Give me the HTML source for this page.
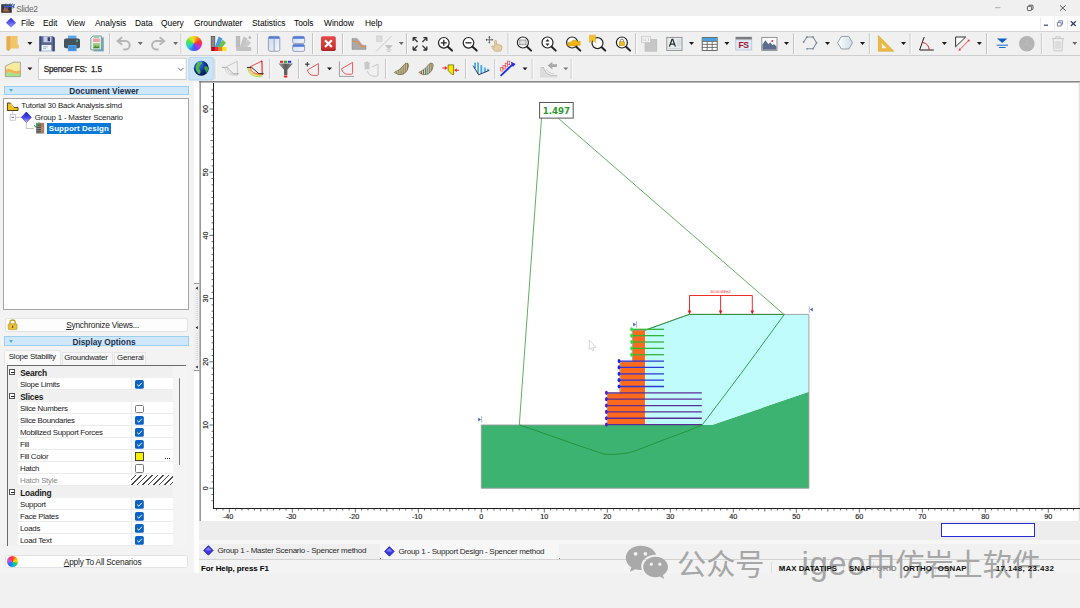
<!DOCTYPE html>
<html><head><meta charset="utf-8"><title>Slide2</title>
<style>
*{box-sizing:border-box;margin:0;padding:0}
html,body{width:1080px;height:608px;overflow:hidden;background:#f0f0f0}
body{position:relative;font-family:"Liberation Sans","Noto Sans CJK SC",sans-serif;font-size:8px;color:#000;line-height:1}
.abs{position:absolute}
.t{position:absolute;white-space:nowrap;line-height:10px;height:10px}
#title{left:0;top:0;width:1080px;height:16px;background:#f0f0f0}
#menu{left:0;top:16px;width:1080px;height:15px;background:#fff}
#tb1{left:0;top:31px;width:1080px;height:25px;background:#f0f0f0;border-top:1px solid #d4d4d4;border-bottom:1px solid #cfcfcf}
#tb2{left:0;top:56px;width:1080px;height:25px;background:#f0f0f0}
.m{font-size:8.4px;top:17.5px;line-height:11px;height:11px}
.sep{position:absolute;width:1px;background:#b9b9b9;height:19px}
.dd{position:absolute;width:0;height:0;border-left:2.5px solid transparent;border-right:2.5px solid transparent;border-top:3px solid #222}
.hb{font-weight:bold;font-size:8.3px;color:#1c2f4a;top:0}
.tr{font-size:7.9px;color:#1a1a1a;letter-spacing:-0.2px}
.sb{z-index:5;font-weight:bold;font-size:7.9px;top:563.6px;letter-spacing:-0.15px}
</style></head><body>
<!-- TITLE -->
<div id="title" class="abs"></div>
<div class="t" style="left:16.2px;top:3.6px;font-size:8.4px;color:#6a6a6a;letter-spacing:-0.3px">Slide2</div>
<!-- MENU -->
<div id="menu" class="abs"></div>
<div class="t m" style="left:21px">File</div>
<div class="t m" style="left:43px">Edit</div>
<div class="t m" style="left:67px">View</div>
<div class="t m" style="left:95px">Analysis</div>
<div class="t m" style="left:135px">Data</div>
<div class="t m" style="left:161px">Query</div>
<div class="t m" style="left:194px">Groundwater</div>
<div class="t m" style="left:252px">Statistics</div>
<div class="t m" style="left:294px">Tools</div>
<div class="t m" style="left:324px">Window</div>
<div class="t m" style="left:365px">Help</div>
<!-- TOOLBARS -->
<div id="tb1" class="abs"></div>
<div id="tb2" class="abs"></div>
<svg class="abs" style="left:0;top:0" width="1080" height="82" viewBox="0 0 1080 82">
<defs>
<linearGradient id="gd" x1="0" y1="0" x2="0" y2="1"><stop offset="0" stop-color="#2222dd"/><stop offset="1" stop-color="#a0a0fa"/></linearGradient>
<linearGradient id="gwin" x1="0" y1="0" x2="1" y2="1"><stop offset="0" stop-color="#c9d6ee"/><stop offset="1" stop-color="#f8fafd"/></linearGradient>
<linearGradient id="gred" x1="0" y1="0" x2="0" y2="1"><stop offset="0" stop-color="#e24a48"/><stop offset="0.8" stop-color="#d03030"/><stop offset="1" stop-color="#9a2424"/></linearGradient>
<linearGradient id="ghex" x1="0" y1="0" x2="1" y2="0"><stop offset="0" stop-color="#fff"/><stop offset="1" stop-color="#cddbe8"/></linearGradient>
<radialGradient id="gglobe" cx="0.35" cy="0.3" r="0.8"><stop offset="0" stop-color="#3a7ae0"/><stop offset="0.6" stop-color="#0a2a8a"/><stop offset="1" stop-color="#04103a"/></radialGradient>
<linearGradient id="gfun" x1="0" y1="0" x2="1" y2="0"><stop offset="0" stop-color="#9a9a9a"/><stop offset="0.5" stop-color="#5a5a5a"/><stop offset="1" stop-color="#8a8a8a"/></linearGradient>
</defs>
<path d="M109.6 33V54" stroke="#c4c4c4" stroke-width="1"/><path d="M110.6 33V54" stroke="#fafafa" stroke-width="1"/>
<path d="M181 33V54" stroke="#c4c4c4" stroke-width="1"/><path d="M182 33V54" stroke="#fafafa" stroke-width="1"/>
<path d="M257.5 33V54" stroke="#c4c4c4" stroke-width="1"/><path d="M258.5 33V54" stroke="#fafafa" stroke-width="1"/>
<path d="M312.5 33V54" stroke="#c4c4c4" stroke-width="1"/><path d="M313.5 33V54" stroke="#fafafa" stroke-width="1"/>
<path d="M342.5 33V54" stroke="#c4c4c4" stroke-width="1"/><path d="M343.5 33V54" stroke="#fafafa" stroke-width="1"/>
<path d="M406.5 33V54" stroke="#c4c4c4" stroke-width="1"/><path d="M407.5 33V54" stroke="#fafafa" stroke-width="1"/>
<path d="M508.1 33V54" stroke="#c4c4c4" stroke-width="1"/><path d="M509.1 33V54" stroke="#fafafa" stroke-width="1"/>
<path d="M635.6 33V54" stroke="#c4c4c4" stroke-width="1"/><path d="M636.6 33V54" stroke="#fafafa" stroke-width="1"/>
<path d="M793.5 33V54" stroke="#c4c4c4" stroke-width="1"/><path d="M794.5 33V54" stroke="#fafafa" stroke-width="1"/>
<path d="M869.4 33V54" stroke="#c4c4c4" stroke-width="1"/><path d="M870.4 33V54" stroke="#fafafa" stroke-width="1"/>
<path d="M910.2 33V54" stroke="#c4c4c4" stroke-width="1"/><path d="M911.2 33V54" stroke="#fafafa" stroke-width="1"/>
<path d="M986.5 33V54" stroke="#c4c4c4" stroke-width="1"/><path d="M987.5 33V54" stroke="#fafafa" stroke-width="1"/>
<path d="M1041.4 33V54" stroke="#c4c4c4" stroke-width="1"/><path d="M1042.4 33V54" stroke="#fafafa" stroke-width="1"/>
<path d="M215 59V79" stroke="#c4c4c4" stroke-width="1"/><path d="M216 59V79" stroke="#fafafa" stroke-width="1"/>
<path d="M269.8 59V79" stroke="#c4c4c4" stroke-width="1"/><path d="M270.8 59V79" stroke="#fafafa" stroke-width="1"/>
<path d="M298.5 59V79" stroke="#c4c4c4" stroke-width="1"/><path d="M299.5 59V79" stroke="#fafafa" stroke-width="1"/>
<path d="M385.6 59V79" stroke="#c4c4c4" stroke-width="1"/><path d="M386.6 59V79" stroke="#fafafa" stroke-width="1"/>
<path d="M465.6 59V79" stroke="#c4c4c4" stroke-width="1"/><path d="M466.6 59V79" stroke="#fafafa" stroke-width="1"/>
<path d="M494.8 59V79" stroke="#c4c4c4" stroke-width="1"/><path d="M495.8 59V79" stroke="#fafafa" stroke-width="1"/>
<path d="M532.2 59V79" stroke="#c4c4c4" stroke-width="1"/><path d="M533.2 59V79" stroke="#fafafa" stroke-width="1"/>
<path d="M571.2 59V79" stroke="#c4c4c4" stroke-width="1"/><path d="M572.2 59V79" stroke="#fafafa" stroke-width="1"/>
<path d="M27.4 42.1h5l-2.5 2.8z" fill="#1a1a1a"/>
<path d="M689.0 42.1h5l-2.5 2.8z" fill="#1a1a1a"/>
<path d="M724.4 42.1h5l-2.5 2.8z" fill="#1a1a1a"/>
<path d="M784.0 42.1h5l-2.5 2.8z" fill="#1a1a1a"/>
<path d="M825.0 42.1h5l-2.5 2.8z" fill="#1a1a1a"/>
<path d="M860.0 42.1h5l-2.5 2.8z" fill="#1a1a1a"/>
<path d="M901.0 42.1h5l-2.5 2.8z" fill="#1a1a1a"/>
<path d="M941.9 42.1h5l-2.5 2.8z" fill="#1a1a1a"/>
<path d="M976.9 42.1h5l-2.5 2.8z" fill="#1a1a1a"/>
<path d="M137.8 42.1h5l-2.5 2.8z" fill="#6a6a6a"/>
<path d="M173.1 42.1h5l-2.5 2.8z" fill="#6a6a6a"/>
<path d="M398.8 42.1h5l-2.5 2.8z" fill="#6a6a6a"/>
<path d="M1072.3 42.1h5l-2.5 2.8z" fill="#6a6a6a"/>
<path d="M27.4 67.5h5l-2.5 2.8z" fill="#1a1a1a"/>
<path d="M327.0 67.5h5l-2.5 2.8z" fill="#1a1a1a"/>
<path d="M522.5 67.5h5l-2.5 2.8z" fill="#1a1a1a"/>
<path d="M563.3 67.5h5l-2.5 2.8z" fill="#7a7a7a"/>
<rect x="1.2" y="4.2" width="10.6" height="8.6" fill="#3a3532"/><path d="M3 11.5c1-4 2-5 3.500-3.500s2 2.500 3.500 3.500z" fill="#b8623a"/><path d="M3.500 4.500l2 5M6 3.500l1.500 6M8.500 4l-1 5M10 3.500l2 4.500M12.500 3.500l1.500 4.500M14.500 4l-1.500 4.500M4 6.500h9" stroke="#3f63c4" stroke-width="1" fill="none"/>
<path d="M995 7.700h5.400" stroke="#9a9a9a" stroke-width="0.8"/>
<rect x="1027.4" y="6.300" width="4.200" height="4.200" rx="0.8" fill="none" stroke="#333" stroke-width="0.8"/><path d="M1028.8 6.300v-0.300a0.800 0.800 0 0 1 0.800 -0.800h2.600a0.800 0.800 0 0 1 0.800 0.800v2.600a0.800 0.800 0 0 1 -0.800 0.800h-0.400" fill="none" stroke="#333" stroke-width="0.8"/>
<path d="M1060 5.400l5.600 5.200M1065.600 5.400l-5.600 5.200" stroke="#333" stroke-width="0.8"/>
<path d="M11 17.800l5.100 5-5.100 5-5.100-5z" fill="url(#gd)"/>
<path d="M1043.800 25.200h4.200" stroke="#3a4878" stroke-width="1.200"/>
<path d="M1057.400 22.600h3.800v3.400h-3.800zM1058.800 22.400v-1.600h3.800v3.400h-1.400" fill="none" stroke="#5a6890" stroke-width="0.8"/>
<path d="M1070.800 21.200l5 4.800M1075.800 21.200l-5 4.800" stroke="#3a4878" stroke-width="1.400"/>
<path d="M1040.500 17v13M1054.500 17v13M1067.500 17v13" stroke="#ececec" stroke-width="1"/>
<path d="M9.600 36h8v8.600h1.200v3.800h-9.200z" fill="#f1c56c"/><path d="M6.400 36.300l4-0.300v13.400l-1.900 1.700-2.100-1z" fill="#e4ad50"/>
<path d="M39.400 36.200h13.600l1.700 1.600v13.400h-15.300z" fill="#5a6a92"/><path d="M39.400 36.200h1.800v15h-1.800zM53 36.800l1.700 1v13.400h-1.700z" fill="#3e4c74"/><rect x="43.400" y="36.400" width="8" height="5.800" fill="#c6cfe6"/><rect x="47.600" y="37.200" width="2.400" height="4" fill="#36446c"/><rect x="41.600" y="45" width="9.800" height="6.200" fill="#f2f6fc"/><path d="M43.200 46.800h4.600M43.200 48.400h3" stroke="#8a93b0" stroke-width="0.700"/><path d="M41.600 50.600h9.800" stroke="#b8d4f0" stroke-width="1"/>
<rect x="68" y="35.600" width="8.400" height="4" fill="#5aa8ea"/><rect x="64" y="38.600" width="16" height="9.600" rx="1.800" fill="#48525c"/><rect x="67.800" y="45" width="8.800" height="6.200" fill="#4a9ce4"/><path d="M69.200 47.400h6M69.200 49.200h6" stroke="#2f7ac2" stroke-width="0.600"/><circle cx="77" cy="41" r="0.900" fill="#3ad08a"/>
<path d="M93.400 37.400h10.400v14h-10.400z" fill="#7aa6b2"/><path d="M90.800 38l2.400-2h8.200v13.800h-10.600z" fill="#e6f0f0" stroke="#6a98a6" stroke-width="0.900"/><rect x="93" y="38.600" width="6.800" height="3.400" fill="#f2a0a0"/><rect x="93" y="43.200" width="6.800" height="5" fill="#9ac86a"/><path d="M93 48.200l2.400-2.800 1.600 1.600 1.400-1.200 1.400 2.400z" fill="#4a8a3a"/><path d="M94 37.200h5" stroke="#3aa04a" stroke-width="0.600"/>
<path d="M122.200 37.200l-4.600 3.800 4.600 3.800" fill="none" stroke="#b6b6b6" stroke-width="2"/><path d="M118 41h7.400a4.300 4.300 0 0 1 0 8.600h-2.200" fill="none" stroke="#b6b6b6" stroke-width="2"/>
<path d="M159.600 37.200l4.600 3.800-4.600 3.800" fill="none" stroke="#b6b6b6" stroke-width="2"/><path d="M163.800 41h-7.400a4.300 4.300 0 0 0 0 8.600h2.200" fill="none" stroke="#b6b6b6" stroke-width="2"/>
</svg>
<div class="abs" style="left:186.200px;top:35.600px;width:15.800px;height:15.800px;border-radius:50%;background:conic-gradient(from 0deg,#ffd21a,#ff8a1a,#ff3a2a,#e82a7a,#b03af0,#5a4af0,#2a7af0,#2ac0f0,#2ae0a0,#5ae03a,#c0f02a,#ffd21a)"></div>
<svg class="abs" style="left:0;top:0" width="1080" height="82" viewBox="0 0 1080 82">
<rect x="211.2" y="36.400" width="3.600" height="11" fill="#8a8a8a" stroke="#4a4a4a" stroke-width="0.700"/>
<path d="M215.0 47l3.600-10.400 3.800 1.800-3 8.600z" fill="#4a9ae8"/>
<path d="M217.6 47l5.200-7.200 3.200 3-3.600 4.200z" fill="#6ac04a"/>
<rect x="211.2" y="47" width="3.750" height="4" fill="#c00010"/>
<rect x="214.95" y="47" width="3.750" height="4" fill="#e03030"/>
<rect x="218.7" y="47" width="3.750" height="4" fill="#f07a1a"/>
<rect x="222.45" y="47" width="3.750" height="4" fill="#f4c81a"/>
<rect x="222.45" y="47" width="3.750" height="4" fill="#f8e61a"/>
<rect x="236.2" y="36.400" width="3.600" height="11" fill="#bdbdbd" stroke="#b0b0b0" stroke-width="0.700"/>
<path d="M240.0 47l3.600-10.400 3.800 1.800-3 8.600z" fill="#c4c4c4"/>
<path d="M242.6 47l5.200-7.200 3.200 3-3.600 4.200z" fill="#cacaca"/>
<rect x="236.2" y="47" width="15" height="4" fill="#c2c2c2"/>
<path d="M248.6 37.200l1.200-1.800 1.200 1.800a1.300 1.300 0 1 1-2.400 0z" fill="#b8b8b8"/>
<rect x="268.400" y="36.400" width="11.400" height="14.800" rx="1.600" fill="url(#gwin)" stroke="#8c98b0" stroke-width="0.900"/><path d="M268.800 38.800v-1a1.200 1.200 0 0 1 1.200-1.200h8.200a1.200 1.200 0 0 1 1.200 1.200v1z" fill="#4a78de"/><path d="M274.100 36.600v14.400" stroke="#8c98b0" stroke-width="0.900"/>
<rect x="292.600" y="36.4" width="12" height="7" rx="1.600" fill="url(#gwin)" stroke="#8c98b0" stroke-width="0.900"/><path d="M293 38.8v-1a1.200 1.200 0 0 1 1.200-1.200h8.800a1.200 1.200 0 0 1 1.200 1.200v1z" fill="#4a78de"/>
<rect x="292.600" y="44.4" width="12" height="7" rx="1.600" fill="url(#gwin)" stroke="#8c98b0" stroke-width="0.900"/><path d="M293 46.8v-1a1.200 1.200 0 0 1 1.200-1.200h8.800a1.200 1.200 0 0 1 1.200 1.200v1z" fill="#4a78de"/>
<rect x="321" y="36.200" width="14.800" height="14.800" rx="1.800" fill="url(#gred)"/><path d="M325 40.200l6.800 6.800M331.800 40.200l-6.800 6.800" stroke="#fff" stroke-width="2.200"/>
<path d="M352 38.400h4c3 0 4.500 7 8 7h2v4h-14z" fill="#a9a9a9" stroke="#8a8a8a" stroke-width="0.500"/><path d="M352.400 41.200h3.400c3 0 4 5.600 7.400 5.600h2.600" fill="none" stroke="#f0803a" stroke-width="1.100"/>
<rect x="376.600" y="36" width="5.400" height="5.400" fill="#dcdcdc" stroke="#c8c8c8" stroke-width="0.600"/><path d="M376 51.600l15.600-15.600" stroke="#c6c6c6" stroke-width="0.900"/><path d="M385.400 45.600h6.800l-3.400 3.200zM386.200 49.800h5.200M387.200 51.400h3.200" fill="#c0c0c0" stroke="#c0c0c0" stroke-width="0.800"/>
<path d="M417.6 42l-4.4 -4.4" stroke="#2c2c2c" stroke-width="1.300"/><path d="M413.20000000000005 37.6h3.4M413.20000000000005 37.6v3.4" stroke="#2c2c2c" stroke-width="1.300" fill="none"/>
<path d="M422.4 42l4.4 -4.4" stroke="#2c2c2c" stroke-width="1.300"/><path d="M426.79999999999995 37.6h-3.4M426.79999999999995 37.6v3.4" stroke="#2c2c2c" stroke-width="1.300" fill="none"/>
<path d="M417.6 45.6l-4.4 4.4" stroke="#2c2c2c" stroke-width="1.300"/><path d="M413.20000000000005 50.0h3.4M413.20000000000005 50.0v-3.4" stroke="#2c2c2c" stroke-width="1.300" fill="none"/>
<path d="M422.4 45.6l4.4 4.4" stroke="#2c2c2c" stroke-width="1.300"/><path d="M426.79999999999995 50.0h-3.4M426.79999999999995 50.0v-3.4" stroke="#2c2c2c" stroke-width="1.300" fill="none"/>
<circle cx="443.8" cy="42.8" r="5.3" fill="#fff" stroke="#222" stroke-width="1.200"/><path d="M447.84763000000004 46.847629999999995L452.0 50.6" stroke="#222" stroke-width="2" stroke-linecap="round"/>
<path d="M440.800 42.800h6M443.800 39.800v6" stroke="#222" stroke-width="1.300"/>
<circle cx="468.5" cy="42.8" r="5.3" fill="#fff" stroke="#222" stroke-width="1.200"/><path d="M472.54763 46.847629999999995L476.7 50.6" stroke="#222" stroke-width="2" stroke-linecap="round"/>
<path d="M465.500 42.800h6" stroke="#222" stroke-width="1.300"/>
<path d="M486.400 39.800h6M489.400 36.800v6" stroke="#555" stroke-width="0.800"/><path d="M489.400 36l1.200 1.400h-2.400zM489.400 43.600l1.200-1.400h-2.400zM485.600 39.800l1.400-1.200v2.400zM493.200 39.800l-1.400-1.200v2.400z" fill="#444"/>
<path d="M494.600 41.400a1 1 0 0 1 2 0v3l3.800 0.600c1.400 0.200 1.800 1.400 1.600 2.600l-0.600 2.400c-0.200 0.800-0.800 1.200-1.600 1.200h-4.200c-0.800 0-1.400-0.400-1.800-1l-2-3.200c-0.400-0.800 0.600-1.600 1.400-0.800l1.400 1.200z" fill="#e6cfa6" stroke="#b89a6a" stroke-width="0.600"/>
<circle cx="522.9" cy="42.5" r="5.5" fill="#fff" stroke="#222" stroke-width="1.200"/><path d="M527.0890499999999 46.689049999999995L531.1 50.6" stroke="#222" stroke-width="2" stroke-linecap="round"/>
<rect x="519.800" y="40" width="6.200" height="4.800" fill="#e0e0e0" stroke="#777" stroke-width="0.700"/>
<circle cx="547.5" cy="42.5" r="5.5" fill="#fff" stroke="#222" stroke-width="1.200"/><path d="M551.68905 46.689049999999995L555.7 50.6" stroke="#222" stroke-width="2" stroke-linecap="round"/>
<path d="M547.500 39l2 2.600h-4zM547.500 46l2-2.600h-4z" fill="#222"/>
<circle cx="572.1" cy="42.5" r="5.5" fill="#fff" stroke="#222" stroke-width="1.200"/><path d="M576.28905 46.689049999999995L580.3000000000001 50.6" stroke="#222" stroke-width="2" stroke-linecap="round"/>
<path d="M567.800 42.600l3-0.400 2-2h3.600v1h3.800v4h-3.800v0.800h-8.600z" fill="#f2b40e" stroke="#b8860a" stroke-width="0.400"/>
<circle cx="597.5" cy="43.1" r="5.5" fill="#fff" stroke="#222" stroke-width="1.200"/><path d="M601.68905 47.289049999999996L605.2 50.6" stroke="#222" stroke-width="2" stroke-linecap="round"/>
<path d="M589.400 35.200h6.200v7.400l-3.100-2-3.100 2z" fill="#f4c22a" stroke="#d8a010" stroke-width="0.400"/>
<circle cx="621.9" cy="42.5" r="5.5" fill="#fff" stroke="#222" stroke-width="1.200"/><path d="M626.0890499999999 46.689049999999995L630.1 50.6" stroke="#222" stroke-width="2" stroke-linecap="round"/>
<path d="M620.400 41.800v-1.200a1.500 1.500 0 0 1 3 0v1.200" fill="none" stroke="#555" stroke-width="0.800"/><rect x="619.200" y="41.800" width="5.400" height="3.800" fill="#f0b820" stroke="#a87a0a" stroke-width="0.400"/>
<rect x="645" y="39.400" width="11.800" height="11.800" fill="#c6c6c6" stroke="#b8b8b8" stroke-width="0.600"/><rect x="641.400" y="36.300" width="9.200" height="6.200" fill="#f4f4f4" stroke="#c4c4c4" stroke-width="0.700"/><path d="M643 38v3M644.800 38.200c1.200-0.600 1.600 0.800 0 2.600h1.600M647.600 38.200c1.600-0.400 1.400 1.200 0.400 1.300 1.200 0.100 1.200 1.700-0.400 1.400" fill="none" stroke="#b0b0b0" stroke-width="0.500"/>
<rect x="666.800" y="37.400" width="15.200" height="13" fill="#e6eef2" stroke="#8a8a8a" stroke-width="0.900"/><path d="M669.400 46.600l2.600-7.200h0.800l2.600 7.200M670.400 44.200h4" fill="none" stroke="#2a2a2a" stroke-width="1.300"/><path d="M676.600 40h4M676.600 41.800h4M676.600 43.600h4M676.600 45.400h4M668.600 48.400h12" stroke="#b4bec4" stroke-width="0.600"/>
<rect x="702.200" y="37.600" width="15" height="12.800" fill="#fff" stroke="#555" stroke-width="0.900"/><rect x="702.600" y="38" width="14.200" height="3.200" fill="#4aa2e4"/><path d="M702.200 41.400h15M702.200 44.400h15M702.200 47.400h15M707.200 41.400v9M712.200 41.400v9" stroke="#555" stroke-width="0.800"/>
<rect x="735.800" y="37" width="16" height="13" fill="#dfe8f8" stroke="#a8b4cc" stroke-width="0.600"/><rect x="735.800" y="37" width="16" height="2.600" fill="#7c7c7c"/><path d="M736 40h15.600" stroke="#c9d4ea" stroke-width="0.600"/>
<text x="743.600" y="47.800" text-anchor="middle" font-family="Liberation Sans, sans-serif" font-weight="bold" font-size="8.600" fill="#a0101e" letter-spacing="-0.300">FS</text>
<rect x="761.800" y="37.400" width="15.200" height="13" fill="#fafafa" stroke="#8a8a8a" stroke-width="0.900"/><path d="M762.400 49.800v-5.400l3-4.200 3 4 1.800-2 2.400 3 1.400-1.200 2.400 2.600v3.200z" fill="#5c6c8c"/><circle cx="772.300" cy="41" r="1" fill="#e8304a"/>
<path d="M803.600 42l3.400-5h6l3.600 5.800-3.600 6h-6" fill="none" stroke="#7e8e9c" stroke-width="1.100"/><g fill="#7e8e9c"><circle cx="803.600" cy="42" r="0.900"/><circle cx="807" cy="37" r="0.900"/><circle cx="813" cy="37" r="0.900"/><circle cx="816.600" cy="42.800" r="0.900"/><circle cx="813" cy="48.800" r="0.900"/><circle cx="807" cy="48.800" r="0.900"/></g>
<path d="M837.600 42.700l3.800-6.300h7.400l3.800 6.300-3.800 6.300h-7.400z" fill="url(#ghex)" stroke="#8796a8" stroke-width="0.900"/>
<path d="M878.400 35.600v15.600h15.400z" fill="#eab93e" stroke="#d6a42a" stroke-width="0.600"/><path d="M881.800 43.200v5h5z" fill="#f4f0e6"/>
<path d="M924.200 37l-4.600 13h14.200" fill="none" stroke="#1c1c1c" stroke-width="1"/><path d="M922.600 42.400a8.200 8.200 0 0 1 6.600 7.600" fill="none" stroke="#e0202a" stroke-width="1"/>
<path d="M955.600 37h10l-10 9.800z" fill="#fff" stroke="#1c1c1c" stroke-width="0.900"/><path d="M959.200 50.200l10-10.200" stroke="#ee3a3a" stroke-width="0.900"/><path d="M958.600 50.800l0.600-2.600 2 2zM969.800 39.400l-0.600 2.600-2-2z" fill="#ee3a3a"/><path d="M956 47.200l2.800 3M966 37.400l3.200 2.600" stroke="#cfcfcf" stroke-width="0.500"/>
<path d="M997 38.400h10.400l-5.200 4.600z" fill="#0a62c8"/><path d="M996.600 45.200h11.400M999 47.500h6.600" stroke="#1a6ed0" stroke-width="1"/>
<circle cx="1026.800" cy="43.800" r="7.800" fill="#b4b4b4"/><path d="M1026.800 43.800v-7.800M1026.800 43.800l6.800 3.800M1026.800 43.800l-6.800 3.800" stroke="#bcbcbc" stroke-width="0.700"/>
<path d="M1052 38.600h12M1055.800 38.400v-1.600h4.400v1.600M1053.200 38.800l0.800 12h8l0.800-12M1056 41v7.800M1058 41v7.800M1060 41v7.800" fill="none" stroke="#c4c4c4" stroke-width="0.900"/>
<path d="M5.400 66l8-3.800h7v14.400h-15z" fill="#f6eb9c"/><path d="M5.400 69.600c4-1.400 6 0 8 0.800s4 1 7-0.400v3.400c-3 1-5 0.800-7 0s-4-1.400-8 0.200z" fill="#f0b45a"/><path d="M5.400 73.400c4-1.600 6-0.800 8 0s4 1.200 7 0v3.200h-15z" fill="#a6e28e"/><path d="M5.400 66l8-3.800h7v14.400h-15z" fill="none" stroke="#8e8e8e" stroke-width="0.700"/>
<rect x="38.600" y="58.200" width="147.600" height="21.200" fill="#fff" stroke="#c6c6c6" stroke-width="0.900"/><path d="M178.200 67.800l2.700 2.700 2.700-2.700" fill="none" stroke="#555" stroke-width="0.900"/>
<rect x="188.800" y="57.400" width="24.400" height="22.600" rx="1" fill="#cce4f7" stroke="#a6d2f4" stroke-width="0.800"/><circle cx="201.300" cy="68.200" r="7.500" fill="url(#gglobe)"/><path d="M197.200 63.400c1.600-1.400 3.600-1.600 5-1 0.400 1.200-0.600 2-1.800 2.400-0.400 1.400-1.400 2.200-1.200 3.600 0.200 1.400 1.600 2.200 1.400 3.800-0.200 1-1 1.800-1.600 2-1.800-1.600-3.600-3.800-3.400-6.600 0.200-1.800 0.800-3.200 1.600-4.200z" fill="#4ab84a"/><path d="M204.600 66.600c1.400-0.600 2.800 0 3.800 1.400 0 1.800-0.800 3.600-2.200 5-0.600-1-0.400-2.200-1.200-3.200-0.600-1-1.200-2.200-0.400-3.200z" fill="#3aa03a"/><path d="M196.600 63.200a6.400 6.400 0 0 1 6-2" stroke="#9cc4f8" stroke-width="0.800" fill="none" opacity="0.700"/>
<path d="M226.400 66.800l10.800-5.500 0.300 14" fill="none" stroke="#bdbdbd" stroke-width="0.800"/><path d="M225 68c0.400 4.600 3.600 7.600 12.400 7.400" fill="none" stroke="#c6c6c6" stroke-width="0.700"/><path d="M227 68c0.600 3.800 3.400 6.600 10.400 6.400" fill="none" stroke="#c6c6c6" stroke-width="0.700"/><path d="M221.900 67.400h5l6.400 6.300h5.600" fill="none" stroke="#a6a6a6" stroke-width="0.900"/>
<path d="M248 67.800c0.300 5.600 3.600 9.400 14.200 8.800" fill="none" stroke="#86dc50" stroke-width="0.900"/><path d="M248.900 67.800c0.300 5 3.400 8.400 13.300 7.900" fill="none" stroke="#f4dc28" stroke-width="0.900"/><path d="M249.800 67.800c0.300 4.400 3.200 7.400 12.400 7" fill="none" stroke="#f49a28" stroke-width="0.900"/><path d="M250.700 67.800c0.400 3.800 3 6.400 11.500 6.100" fill="none" stroke="#ee5a3a" stroke-width="0.900"/><path d="M250 66.800l11.400-5.500" fill="none" stroke="#e83a3a" stroke-width="0.900"/><path d="M261.900 61.300l0.400 13.800" fill="none" stroke="#e85a5a" stroke-width="1.500"/><path d="M246.900 67.400h4.800l7.200 6.300h4.700" fill="none" stroke="#2a2a2a" stroke-width="1"/><circle cx="261.500" cy="61.400" r="0.800" fill="#e82a2a"/>
<rect x="280" y="60.800" width="3.200" height="2" fill="#e82020"/><rect x="284" y="60.800" width="3.200" height="2" fill="#20a020"/><rect x="288" y="60.800" width="3.200" height="2" fill="#2030e8"/><path d="M278.400 63.400h14.600l-5.600 6.400v5.200h-3.400v-5.200z" fill="url(#gfun)"/><rect x="283.800" y="75.600" width="3.600" height="1.800" rx="0.600" fill="#ee1c1c"/>
<path d="M307.4 70.0L318.4 63.6V74.0c0 1-0.400 1.400-1.400 1.400h-3.800c-3 0-5.200-2.400-5.800-5.400z" fill="none" stroke="#e4484c" stroke-width="0.900"/>
<path d="M305 64.200h4.600M307.300 62v4.600" stroke="#1a1a1a" stroke-width="0.900"/>
<path d="M341.6 68.8L352.6 62.4V72.8c0 1-0.400 1.400-1.400 1.400h-3.800c-3 0-5.200-2.400-5.800-5.400z" fill="none" stroke="#e4484c" stroke-width="0.900"/>
<path d="M339.400 61.400v15h14.600" fill="none" stroke="#8a8a8a" stroke-width="0.800"/>
<path d="M367.400 71c1 3.600 3.400 5.200 6.600 5.200h2.800c0.800 0 1.200-0.400 1.200-1.200v-11l-6 3" fill="none" stroke="#c2c2c2" stroke-width="0.900"/><rect x="364.600" y="63.400" width="4.800" height="6" fill="#c8c8c8"/><path d="M364 63h6M366 62.200h2" stroke="#b0b0b0" stroke-width="0.800"/>
<clipPath id="hs1"><path d="M394.2 72.400Q399.59999999999997 70.800 405.4 63.300Q408.8 62.400 408.59999999999997 66Q408.0 71.400 403.59999999999997 74Q398.8 76.200 394.2 72.400Z"/></clipPath>
<path d="M394.2 72.400Q399.59999999999997 70.800 405.4 63.300Q408.8 62.400 408.59999999999997 66Q408.0 71.400 403.59999999999997 74Q398.8 76.200 394.2 72.400Z" fill="#e2d29c" stroke="#6e6a58" stroke-width="0.700"/>
<g clip-path="url(#hs1)">
<path d="M396.80 60V78" stroke="#55513e" stroke-width="0.800"/>
<path d="M398.90 60V78" stroke="#55513e" stroke-width="0.800"/>
<path d="M401.00 60V78" stroke="#55513e" stroke-width="0.800"/>
<path d="M403.10 60V78" stroke="#55513e" stroke-width="0.800"/>
<path d="M405.20 60V78" stroke="#55513e" stroke-width="0.800"/>
<path d="M407.30 60V78" stroke="#55513e" stroke-width="0.800"/>
</g>
<clipPath id="hs2"><path d="M418.8 72.400Q424.2 70.800 430.0 63.300Q433.40000000000003 62.400 433.2 66Q432.6 71.400 428.2 74Q423.40000000000003 76.200 418.8 72.400Z"/></clipPath>
<path d="M418.8 72.400Q424.2 70.800 430.0 63.300Q433.40000000000003 62.400 433.2 66Q432.6 71.400 428.2 74Q423.40000000000003 76.200 418.8 72.400Z" fill="#e2d29c" stroke="#6e6a58" stroke-width="0.700"/>
<g clip-path="url(#hs2)">
<path d="M421.40 60V78" stroke="#55513e" stroke-width="0.800"/>
<path d="M423.50 60V78" stroke="#55513e" stroke-width="0.800"/>
<path d="M425.60 60V78" stroke="#55513e" stroke-width="0.800"/>
<path d="M427.70 60V78" stroke="#55513e" stroke-width="0.800"/>
<path d="M429.80 60V78" stroke="#55513e" stroke-width="0.800"/>
<path d="M431.90 60V78" stroke="#55513e" stroke-width="0.800"/>
<rect x="425.95" y="60" width="1.400" height="18" fill="#7ec0f0"/>
</g>
<path d="M448.100 64.900h5.500v9.700l-1.800-0.400-3.700-3.600z" fill="#f8e800" stroke="#5a5200" stroke-width="0.700"/><path d="M442.200 68h3M456.600 70.200h2.400" stroke="#ee1c24" stroke-width="0.900"/><path d="M447.400 68l-2.600-1.900v3.800zM454.200 70.200l2.600-1.900v3.800z" fill="#ee1c24"/>
<path d="M474.9 62.8V68.62" stroke="#2b9ae6" stroke-width="1.800"/><path d="M474.5 63.099999999999994V68.12" stroke="#8fd0fa" stroke-width="0.600"/>
<path d="M477.9 62.6V73.50" stroke="#2b9ae6" stroke-width="1.800"/><path d="M477.5 62.9V73.00" stroke="#8fd0fa" stroke-width="0.600"/>
<path d="M481.3 65.2V73.71" stroke="#2b9ae6" stroke-width="1.800"/><path d="M480.90000000000003 65.5V73.21" stroke="#8fd0fa" stroke-width="0.600"/>
<path d="M484.8 67.6V72.24" stroke="#2b9ae6" stroke-width="1.800"/><path d="M484.40000000000003 67.89999999999999V71.74" stroke="#8fd0fa" stroke-width="0.600"/>
<path d="M487.8 68.8V70.98" stroke="#2b9ae6" stroke-width="1.800"/><path d="M487.40000000000003 69.1V70.48" stroke="#8fd0fa" stroke-width="0.600"/>
<path d="M473.100 65.700l5.600 9.100 10.700-4.500" fill="none" stroke="#1c2c4a" stroke-width="0.900"/>
<rect x="500.70" y="67.40" width="2.250" height="3.600" fill="none" stroke="#ee3a44" stroke-width="0.650"/>
<rect x="502.95" y="65.30" width="2.250" height="3.600" fill="none" stroke="#ee3a44" stroke-width="0.650"/>
<rect x="505.20" y="63.20" width="2.250" height="3.600" fill="none" stroke="#ee3a44" stroke-width="0.650"/>
<rect x="507.45" y="61.10" width="2.250" height="3.600" fill="none" stroke="#ee3a44" stroke-width="0.650"/>
<path d="M500.600 75.900l12.300-11.800" stroke="#2030e0" stroke-width="1.900"/><path d="M510.600 61.400l5 2.600-2.800 3z" fill="#2030e0"/>
<path d="M540 67.600h3.600c1.600 5 5 8 10.200 8h3.400v2h-17.200z" fill="#dcdcdc"/><path d="M541 67.600h2.600c1.600 5 5 8 10.200 8h3.400" fill="none" stroke="#b8b8b8" stroke-width="0.800"/><path d="M546.200 69c1.600 3.200 4.200 4.800 8 4.800" fill="none" stroke="#c4c4c4" stroke-width="0.800"/><path d="M547.600 65.600l4.800-3.800v2.400h4.600v2.800h-4.600v2.400z" fill="#a8a8a8"/>
</svg>
<div class="t" style="left:43.800px;top:63.600px;font-size:8.200px;line-height:11px;height:11px;color:#222;-webkit-text-stroke:0.250px #222;letter-spacing:-0.220px">Spencer FS:&nbsp; 1.5</div>
<!-- LEFT PANEL -->
<div class="abs" style="left:0;top:82px;width:193.5px;height:491px;background:#f3f3f3"></div>
<div class="abs" style="left:193.5px;top:82px;width:6.5px;height:491px;background:#fff"></div>
<div class="abs" style="left:193.5px;top:283px;width:6.5px;height:88.4px;background:#f0f0f0;border-top:1px solid #9a9a9a;border-bottom:1px solid #9a9a9a"></div>
<svg class="abs" style="left:190px;top:280px" width="10" height="100" viewBox="0 0 10 100"><path d="M7.8 6.6v3.2l-2.2-1.6zM7.8 46v3.2l-2.2-1.6zM7.8 85.4v3.2l-2.2-1.6z" fill="#222"/><path d="M7 13V41M7 53V80" stroke="#999" stroke-width="0.6" stroke-dasharray="0.8 1.2"/></svg>
<div class="abs" style="left:4px;top:85.8px;width:185px;height:9.4px;background:#cfe8f9;border:1px solid #9ccff2"></div>
<div class="abs" style="left:8.8px;top:89.0px;width:0;height:0;border-left:2.6px solid transparent;border-right:2.6px solid transparent;border-top:3px solid #55a9e6"></div>
<div class="t hb" style="left:4px;width:200px;text-align:center;top:86.1px">Document Viewer</div>
<div class="abs" style="left:4px;top:336.4px;width:185px;height:9.4px;background:#cfe8f9;border:1px solid #9ccff2"></div>
<div class="abs" style="left:8.8px;top:339.59999999999997px;width:0;height:0;border-left:2.6px solid transparent;border-right:2.6px solid transparent;border-top:3px solid #55a9e6"></div>
<div class="t hb" style="left:4px;width:200px;text-align:center;top:336.7px">Display Options</div>
<div class="abs" style="left:3.1px;top:98.4px;width:186.1px;height:211.4px;background:#fff;border:1px solid #a6a6a6"></div>
<svg class="abs" style="left:0;top:98px" width="130" height="40" viewBox="0 0 130 40">
<defs><linearGradient id="gd2" x1="0" y1="0" x2="0" y2="1"><stop offset="0" stop-color="#1414d0"/><stop offset="0.55" stop-color="#4a4af0"/><stop offset="1" stop-color="#c4c4ff"/></linearGradient></defs>
<path d="M7.4 5h3l3.400 4.400h4.200v3.100H7.400z" fill="#efc01c" stroke="#3e300a" stroke-width="0.9" stroke-linejoin="round"/>
<path d="M10.600 5.600l3 3.900" stroke="#fff6d8" stroke-width="0.9"/>
<path d="M12.800 13v3.400M15.500 19.300H21M26.400 24.600V30.500H34" stroke="#a0a0a0" stroke-width="0.6" fill="none"/>
<rect x="10.100" y="16.400" width="5.400" height="5.800" fill="#fff" stroke="#b4b4c4" stroke-width="0.7"/><path d="M11.400 19.300h2.800" stroke="#3a4a8a" stroke-width="0.8"/>
<path d="M26.400 14l5 5.300-5 5.300-5-5.300z" fill="url(#gd2)" stroke="#1a1a8a" stroke-width="0.5"/>
<rect x="36" y="24.800" width="8.200" height="10.800" fill="#8c8c8c"/>
<path d="M36.600 27.200h7M36.600 29.400h7M36.600 31.600h7M36.600 33.800h7" stroke="#4e4e4e" stroke-width="1.200"/>
<path d="M41 27.200h2.600M41 29.400h2.600M41 31.600h2.600M41 33.800h2.600" stroke="#f0843a" stroke-width="1.200"/>
<path d="M40.800 24.800l1.600 1.200h-3z" fill="#c86a3a"/>
<path d="M34 27l1.600 2 3.800-4.600" stroke="#2eb050" stroke-width="1.100" fill="none"/>
</svg>
<div class="t tr" style="left:21.2px;top:101.3px">Tutorial 30 Back Analysis.slmd</div>
<div class="t tr" style="left:34.8px;top:112.6px">Group 1 - Master Scenario</div>
<div class="abs" style="left:47px;top:122.8px;width:63.6px;height:11.1px;background:#0a78d6"></div>
<div class="t tr" style="left:48.8px;top:123.7px;color:#fff;font-weight:bold;letter-spacing:0.1px">Support Design</div>
<div class="abs" style="left:4.6px;top:318px;width:183.6px;height:13.6px;background:#fdfdfd;border:1px solid #e2e2e2;border-radius:2.5px"></div>
<div class="t tr" style="left:4.6px;width:196px;text-align:center;top:319.6px;font-size:8.3px;color:#222"><u>S</u>ynchronize Views...</div>
<svg class="abs" style="left:7px;top:319px" width="12" height="12" viewBox="0 0 12 12"><path d="M3 5V3.6a2.6 2.6 0 0 1 5.2 0V5" fill="none" stroke="#c9a227" stroke-width="1.3"/><rect x="1.2" y="4.8" width="8.8" height="5.8" rx="0.8" fill="#e9bf3a" stroke="#b08a18" stroke-width="0.6"/><rect x="5" y="6.6" width="1.2" height="2.4" fill="#6a5210"/></svg>
<div class="abs" style="left:4.6px;top:555px;width:183.6px;height:13.4px;background:#fdfdfd;border:1px solid #e2e2e2;border-radius:2.5px"></div>
<div class="t tr" style="left:4.6px;width:196px;text-align:center;top:556.5px;font-size:8.3px;color:#222"><u>A</u>pply To All Scenarios</div>
<div class="abs" style="left:7px;top:556.2px;width:11px;height:11px;border-radius:50%;background:conic-gradient(#ff3b30,#ff9500,#ffe600,#34c759,#00c7be,#0a84ff,#5e5ce6,#bf5af2,#ff2d92,#ff3b30)"></div>
<div class="abs" style="left:4px;top:349.6px;width:56.8px;height:16px;background:#fafafa;border:1px solid #e4e4e4;border-bottom:none;border-radius:2px 2px 0 0"></div>
<div class="abs" style="left:61.6px;top:351.6px;width:51.6px;height:14px;background:#f6f6f6;border:1px solid #e6e6e6;border-bottom:none"></div>
<div class="abs" style="left:113.6px;top:351.6px;width:32px;height:14px;background:#f6f6f6;border:1px solid #e6e6e6;border-bottom:none"></div>
<div class="t tr" style="left:8.8px;top:352.2px">Slope Stability</div>
<div class="t tr" style="left:64.2px;top:353.3px">Groundwater</div>
<div class="t tr" style="left:117px;top:353.3px">General</div>
<div class="abs" style="left:6.6px;top:365.2px;width:179px;height:181px;background:#f4f4f4;border-top:1.2px solid #6a6a6a;border-left:1.2px solid #6a6a6a"></div>
<div class="abs" style="left:7.8px;top:366.40px;width:165.4px;height:11.98px;background:#f0f0f0"></div>
<div class="abs" style="left:9.4px;top:369.40px;width:6px;height:6px;border:0.8px solid #555;background:#fff"></div><div class="abs" style="left:10.8px;top:372.00px;width:3.2px;height:0.8px;background:#222"></div>
<div class="t tr" style="left:20.2px;top:367.70px;font-weight:bold;font-size:8.4px">Search</div>
<div class="abs" style="left:7.8px;top:378.38px;width:9.8px;height:11.98px;background:#f0f0f0"></div>
<div class="abs" style="left:17.6px;top:378.38px;width:155.6px;height:11.98px;background:#fff;border-bottom:0.8px solid #ececec"></div>
<div class="abs" style="left:131.4px;top:378.38px;width:0.8px;height:11.98px;background:#ececec"></div>
<div class="t tr" style="left:20px;top:380.18px;color:#1a1a1a;letter-spacing:-0.28px">Slope Limits</div>
<svg class="abs" style="left:135.2px;top:380.38px" width="9" height="9" viewBox="0 0 9 9"><rect x="0" y="0" width="8.8" height="8.8" rx="1.6" fill="#0a63c2"/><path d="M2.2 4.6l1.6 1.6 3-3.4" stroke="#fff" stroke-width="1" fill="none"/></svg>
<div class="abs" style="left:7.8px;top:390.36px;width:165.4px;height:11.98px;background:#f0f0f0"></div>
<div class="abs" style="left:9.4px;top:393.36px;width:6px;height:6px;border:0.8px solid #555;background:#fff"></div><div class="abs" style="left:10.8px;top:395.96px;width:3.2px;height:0.8px;background:#222"></div>
<div class="t tr" style="left:20.2px;top:391.66px;font-weight:bold;font-size:8.4px">Slices</div>
<div class="abs" style="left:7.8px;top:402.34px;width:9.8px;height:11.98px;background:#f0f0f0"></div>
<div class="abs" style="left:17.6px;top:402.34px;width:155.6px;height:11.98px;background:#fff;border-bottom:0.8px solid #ececec"></div>
<div class="abs" style="left:131.4px;top:402.34px;width:0.8px;height:11.98px;background:#ececec"></div>
<div class="t tr" style="left:20px;top:404.14px;color:#1a1a1a;letter-spacing:-0.28px">Slice Numbers</div>
<div class="abs" style="left:135.4px;top:404.54px;width:8.4px;height:8.4px;border:0.9px solid #7a7a7a;border-radius:1.6px;background:#fff"></div>
<div class="abs" style="left:7.8px;top:414.32px;width:9.8px;height:11.98px;background:#f0f0f0"></div>
<div class="abs" style="left:17.6px;top:414.32px;width:155.6px;height:11.98px;background:#fff;border-bottom:0.8px solid #ececec"></div>
<div class="abs" style="left:131.4px;top:414.32px;width:0.8px;height:11.98px;background:#ececec"></div>
<div class="t tr" style="left:20px;top:416.12px;color:#1a1a1a;letter-spacing:-0.28px">Slice Boundaries</div>
<svg class="abs" style="left:135.2px;top:416.32px" width="9" height="9" viewBox="0 0 9 9"><rect x="0" y="0" width="8.8" height="8.8" rx="1.6" fill="#0a63c2"/><path d="M2.2 4.6l1.6 1.6 3-3.4" stroke="#fff" stroke-width="1" fill="none"/></svg>
<div class="abs" style="left:7.8px;top:426.30px;width:9.8px;height:11.98px;background:#f0f0f0"></div>
<div class="abs" style="left:17.6px;top:426.30px;width:155.6px;height:11.98px;background:#fff;border-bottom:0.8px solid #ececec"></div>
<div class="abs" style="left:131.4px;top:426.30px;width:0.8px;height:11.98px;background:#ececec"></div>
<div class="t tr" style="left:20px;top:428.10px;color:#1a1a1a;letter-spacing:-0.28px">Mobilized Support Forces</div>
<svg class="abs" style="left:135.2px;top:428.30px" width="9" height="9" viewBox="0 0 9 9"><rect x="0" y="0" width="8.8" height="8.8" rx="1.6" fill="#0a63c2"/><path d="M2.2 4.6l1.6 1.6 3-3.4" stroke="#fff" stroke-width="1" fill="none"/></svg>
<div class="abs" style="left:7.8px;top:438.28px;width:9.8px;height:11.98px;background:#f0f0f0"></div>
<div class="abs" style="left:17.6px;top:438.28px;width:155.6px;height:11.98px;background:#fff;border-bottom:0.8px solid #ececec"></div>
<div class="abs" style="left:131.4px;top:438.28px;width:0.8px;height:11.98px;background:#ececec"></div>
<div class="t tr" style="left:20px;top:440.08px;color:#1a1a1a;letter-spacing:-0.28px">Fill</div>
<svg class="abs" style="left:135.2px;top:440.28px" width="9" height="9" viewBox="0 0 9 9"><rect x="0" y="0" width="8.8" height="8.8" rx="1.6" fill="#0a63c2"/><path d="M2.2 4.6l1.6 1.6 3-3.4" stroke="#fff" stroke-width="1" fill="none"/></svg>
<div class="abs" style="left:7.8px;top:450.26px;width:9.8px;height:11.98px;background:#f0f0f0"></div>
<div class="abs" style="left:17.6px;top:450.26px;width:155.6px;height:11.98px;background:#fff;border-bottom:0.8px solid #ececec"></div>
<div class="abs" style="left:131.4px;top:450.26px;width:0.8px;height:11.98px;background:#ececec"></div>
<div class="t tr" style="left:20px;top:452.06px;color:#1a1a1a;letter-spacing:-0.28px">Fill Color</div>
<div class="abs" style="left:135.2px;top:452.26px;width:8.8px;height:8.8px;border:0.9px solid #444;background:#f7f000"></div>
<div class="abs" style="left:164.6px;top:457.66px;width:5.4px;height:1px;background:repeating-linear-gradient(90deg,#222 0 1.2px,transparent 1.2px 2.1px)"></div>
<div class="abs" style="left:7.8px;top:462.24px;width:9.8px;height:11.98px;background:#f0f0f0"></div>
<div class="abs" style="left:17.6px;top:462.24px;width:155.6px;height:11.98px;background:#fff;border-bottom:0.8px solid #ececec"></div>
<div class="abs" style="left:131.4px;top:462.24px;width:0.8px;height:11.98px;background:#ececec"></div>
<div class="t tr" style="left:20px;top:464.04px;color:#1a1a1a;letter-spacing:-0.28px">Hatch</div>
<div class="abs" style="left:135.4px;top:464.44px;width:8.4px;height:8.4px;border:0.9px solid #7a7a7a;border-radius:1.6px;background:#fff"></div>
<div class="abs" style="left:7.8px;top:474.22px;width:9.8px;height:11.98px;background:#f0f0f0"></div>
<div class="abs" style="left:17.6px;top:474.22px;width:155.6px;height:11.98px;background:#fff;border-bottom:0.8px solid #ececec"></div>
<div class="abs" style="left:131.4px;top:474.22px;width:0.8px;height:11.98px;background:#ececec"></div>
<div class="t tr" style="left:20px;top:476.02px;color:#8a8a8a;letter-spacing:-0.28px">Hatch Style</div>
<div class="abs" style="left:130.6px;top:474.82px;width:42px;height:10.6px;background:repeating-linear-gradient(135deg,#fff 0 3px,#4a4a4a 3px 3.9px)"></div>
<div class="abs" style="left:7.8px;top:486.20px;width:165.4px;height:11.98px;background:#f0f0f0"></div>
<div class="abs" style="left:9.4px;top:489.20px;width:6px;height:6px;border:0.8px solid #555;background:#fff"></div><div class="abs" style="left:10.8px;top:491.80px;width:3.2px;height:0.8px;background:#222"></div>
<div class="t tr" style="left:20.2px;top:487.50px;font-weight:bold;font-size:8.4px">Loading</div>
<div class="abs" style="left:7.8px;top:498.18px;width:9.8px;height:11.98px;background:#f0f0f0"></div>
<div class="abs" style="left:17.6px;top:498.18px;width:155.6px;height:11.98px;background:#fff;border-bottom:0.8px solid #ececec"></div>
<div class="abs" style="left:131.4px;top:498.18px;width:0.8px;height:11.98px;background:#ececec"></div>
<div class="t tr" style="left:20px;top:499.98px;color:#1a1a1a;letter-spacing:-0.28px">Support</div>
<svg class="abs" style="left:135.2px;top:500.18px" width="9" height="9" viewBox="0 0 9 9"><rect x="0" y="0" width="8.8" height="8.8" rx="1.6" fill="#0a63c2"/><path d="M2.2 4.6l1.6 1.6 3-3.4" stroke="#fff" stroke-width="1" fill="none"/></svg>
<div class="abs" style="left:7.8px;top:510.16px;width:9.8px;height:11.98px;background:#f0f0f0"></div>
<div class="abs" style="left:17.6px;top:510.16px;width:155.6px;height:11.98px;background:#fff;border-bottom:0.8px solid #ececec"></div>
<div class="abs" style="left:131.4px;top:510.16px;width:0.8px;height:11.98px;background:#ececec"></div>
<div class="t tr" style="left:20px;top:511.96px;color:#1a1a1a;letter-spacing:-0.28px">Face Plates</div>
<svg class="abs" style="left:135.2px;top:512.16px" width="9" height="9" viewBox="0 0 9 9"><rect x="0" y="0" width="8.8" height="8.8" rx="1.6" fill="#0a63c2"/><path d="M2.2 4.6l1.6 1.6 3-3.4" stroke="#fff" stroke-width="1" fill="none"/></svg>
<div class="abs" style="left:7.8px;top:522.14px;width:9.8px;height:11.98px;background:#f0f0f0"></div>
<div class="abs" style="left:17.6px;top:522.14px;width:155.6px;height:11.98px;background:#fff;border-bottom:0.8px solid #ececec"></div>
<div class="abs" style="left:131.4px;top:522.14px;width:0.8px;height:11.98px;background:#ececec"></div>
<div class="t tr" style="left:20px;top:523.94px;color:#1a1a1a;letter-spacing:-0.28px">Loads</div>
<svg class="abs" style="left:135.2px;top:524.14px" width="9" height="9" viewBox="0 0 9 9"><rect x="0" y="0" width="8.8" height="8.8" rx="1.6" fill="#0a63c2"/><path d="M2.2 4.6l1.6 1.6 3-3.4" stroke="#fff" stroke-width="1" fill="none"/></svg>
<div class="abs" style="left:7.8px;top:534.12px;width:9.8px;height:11.98px;background:#f0f0f0"></div>
<div class="abs" style="left:17.6px;top:534.12px;width:155.6px;height:11.98px;background:#fff;border-bottom:0.8px solid #ececec"></div>
<div class="abs" style="left:131.4px;top:534.12px;width:0.8px;height:11.98px;background:#ececec"></div>
<div class="t tr" style="left:20px;top:535.92px;color:#1a1a1a;letter-spacing:-0.28px">Load Text</div>
<svg class="abs" style="left:135.2px;top:536.12px" width="9" height="9" viewBox="0 0 9 9"><rect x="0" y="0" width="8.8" height="8.8" rx="1.6" fill="#0a63c2"/><path d="M2.2 4.6l1.6 1.6 3-3.4" stroke="#fff" stroke-width="1" fill="none"/></svg>
<div class="abs" style="left:178.6px;top:378px;width:1.6px;height:86.6px;background:#7c7c7c;border-radius:1px"></div>
<!-- CANVAS -->
<svg class="abs" style="left:0;top:0" width="1080" height="608" viewBox="0 0 1080 608">
<rect x="199.5" y="81" width="880.5" height="440" fill="#fff"/>
<rect x="199" y="81" width="881" height="1.6" fill="#8a8a8a"/>
<rect x="199.5" y="81" width="1.3" height="440" fill="#808080"/>
<rect x="1078.6" y="82.6" width="1.4" height="477" fill="#e2e2e2"/>
<g stroke="#222" stroke-width="1" shape-rendering="crispEdges">
<line x1="213.5" y1="83" x2="213.5" y2="508.5"/>
<line x1="213" y1="508.5" x2="1080" y2="508.5"/>
</g>
<path d="M211.5 500.8H213M211.5 494.5H213M209.4 488.2H213M211.5 481.9H213M211.5 475.6H213M211.5 469.2H213M211.5 462.9H213M210.4 456.6H213M211.5 450.3H213M211.5 444.0H213M211.5 437.6H213M211.5 431.3H213M209.4 425.0H213M211.5 418.7H213M211.5 412.4H213M211.5 406.0H213M211.5 399.7H213M210.4 393.4H213M211.5 387.1H213M211.5 380.8H213M211.5 374.4H213M211.5 368.1H213M209.4 361.8H213M211.5 355.5H213M211.5 349.2H213M211.5 342.8H213M211.5 336.5H213M210.4 330.2H213M211.5 323.9H213M211.5 317.6H213M211.5 311.2H213M211.5 304.9H213M209.4 298.6H213M211.5 292.3H213M211.5 286.0H213M211.5 279.6H213M211.5 273.3H213M210.4 267.0H213M211.5 260.7H213M211.5 254.4H213M211.5 248.0H213M211.5 241.7H213M209.4 235.4H213M211.5 229.1H213M211.5 222.8H213M211.5 216.4H213M211.5 210.1H213M210.4 203.8H213M211.5 197.5H213M211.5 191.2H213M211.5 184.8H213M211.5 178.5H213M209.4 172.2H213M211.5 165.9H213M211.5 159.6H213M211.5 153.2H213M211.5 146.9H213M210.4 140.6H213M211.5 134.3H213M211.5 128.0H213M211.5 121.6H213M211.5 115.3H213M209.4 109.0H213M211.5 102.7H213M211.5 96.4H213M211.5 90.0H213M216.7 509V510.5M223.0 509V510.5M229.3 509V512.6M235.6 509V510.5M241.9 509V510.5M248.2 509V510.5M254.5 509V510.5M260.8 509V511.6M267.1 509V510.5M273.4 509V510.5M279.7 509V510.5M286.0 509V510.5M292.3 509V512.6M298.6 509V510.5M304.9 509V510.5M311.2 509V510.5M317.5 509V510.5M323.8 509V511.6M330.1 509V510.5M336.4 509V510.5M342.7 509V510.5M349.0 509V510.5M355.3 509V512.6M361.6 509V510.5M367.9 509V510.5M374.2 509V510.5M380.5 509V510.5M386.8 509V511.6M393.1 509V510.5M399.4 509V510.5M405.7 509V510.5M412.0 509V510.5M418.3 509V512.6M424.6 509V510.5M430.9 509V510.5M437.2 509V510.5M443.5 509V510.5M449.8 509V511.6M456.1 509V510.5M462.4 509V510.5M468.7 509V510.5M475.0 509V510.5M481.3 509V512.6M487.6 509V510.5M493.9 509V510.5M500.2 509V510.5M506.5 509V510.5M512.8 509V511.6M519.1 509V510.5M525.4 509V510.5M531.7 509V510.5M538.0 509V510.5M544.3 509V512.6M550.6 509V510.5M556.9 509V510.5M563.2 509V510.5M569.5 509V510.5M575.8 509V511.6M582.1 509V510.5M588.4 509V510.5M594.7 509V510.5M601.0 509V510.5M607.3 509V512.6M613.6 509V510.5M619.9 509V510.5M626.2 509V510.5M632.5 509V510.5M638.8 509V511.6M645.1 509V510.5M651.4 509V510.5M657.7 509V510.5M664.0 509V510.5M670.3 509V512.6M676.6 509V510.5M682.9 509V510.5M689.2 509V510.5M695.5 509V510.5M701.8 509V511.6M708.1 509V510.5M714.4 509V510.5M720.7 509V510.5M727.0 509V510.5M733.3 509V512.6M739.6 509V510.5M745.9 509V510.5M752.2 509V510.5M758.5 509V510.5M764.8 509V511.6M771.1 509V510.5M777.4 509V510.5M783.7 509V510.5M790.0 509V510.5M796.3 509V512.6M802.6 509V510.5M808.9 509V510.5M815.2 509V510.5M821.5 509V510.5M827.8 509V511.6M834.1 509V510.5M840.4 509V510.5M846.7 509V510.5M853.0 509V510.5M859.3 509V512.6M865.6 509V510.5M871.9 509V510.5M878.2 509V510.5M884.5 509V510.5M890.8 509V511.6M897.1 509V510.5M903.4 509V510.5M909.7 509V510.5M916.0 509V510.5M922.3 509V512.6M928.6 509V510.5M934.9 509V510.5M941.2 509V510.5M947.5 509V510.5M953.8 509V511.6M960.1 509V510.5M966.4 509V510.5M972.7 509V510.5M979.0 509V510.5M985.3 509V512.6M991.6 509V510.5M997.9 509V510.5M1004.2 509V510.5M1010.5 509V510.5M1016.8 509V511.6M1023.1 509V510.5M1029.4 509V510.5M1035.7 509V510.5M1042.0 509V510.5M1048.3 509V512.6M1054.6 509V510.5M1060.9 509V510.5M1067.2 509V510.5M1073.5 509V510.5" stroke="#444" stroke-width="0.8" fill="none"/>
<g font-family="Liberation Sans, sans-serif" font-size="7.2" fill="#1a1a1a" stroke="#1a1a1a" stroke-width="0.15" text-anchor="middle">
<text x="228.1" y="518.8">-40</text>
<text x="291.1" y="518.8">-30</text>
<text x="354.1" y="518.8">-20</text>
<text x="417.1" y="518.8">-10</text>
<text x="481.3" y="518.8">0</text>
<text x="544.3" y="518.8">10</text>
<text x="607.3" y="518.8">20</text>
<text x="670.3" y="518.8">30</text>
<text x="733.3" y="518.8">40</text>
<text x="796.3" y="518.8">50</text>
<text x="859.3" y="518.8">60</text>
<text x="922.3" y="518.8">70</text>
<text x="985.3" y="518.8">80</text>
<text x="1048.3" y="518.8">90</text>
<text transform="translate(207.6 488.2) rotate(-90)" x="0" y="0">0</text>
<text transform="translate(207.6 425.0) rotate(-90)" x="0" y="0">10</text>
<text transform="translate(207.6 361.8) rotate(-90)" x="0" y="0">20</text>
<text transform="translate(207.6 298.6) rotate(-90)" x="0" y="0">30</text>
<text transform="translate(207.6 235.4) rotate(-90)" x="0" y="0">40</text>
<text transform="translate(207.6 172.2) rotate(-90)" x="0" y="0">50</text>
<text transform="translate(207.6 109.0) rotate(-90)" x="0" y="0">60</text>
</g>
<polygon points="481.3,488.2 481.3,425.0 711.88,425.0 808.9,391.82 808.9,488.2" fill="#3cb371"/>
<polygon points="645.1,425.0 645.1,330.2 689.2,314.4 808.9,314.4 808.9,391.82 711.88,425.0" fill="#bffcfb"/>
<polygon points="607.4,424.8 607.4,392.9 620.2,392.9 620.2,361.1 633,361.1 633,329.4 645,329.4 645,424.8" fill="#fd6a1e"/>
<polygon points="481.3,488.2 481.3,425.0 607.3,425.0 607.3,393.4 619.9,393.4 619.9,361.8 632.5,361.8 632.5,330.2 645.1,330.2 689.2,314.4 808.9,314.4 808.9,488.2" fill="none" stroke="#9a9a9a" stroke-width="0.9"/>
<polyline points="689.2,314.4 784.33,314.4" fill="none" stroke="#2e8b2e" stroke-width="1"/>
<polyline points="645.1,330.2 689.2,314.4" fill="none" stroke="#2e9a3e" stroke-width="1"/>
<line x1="607.3" y1="424.6" x2="701.8" y2="424.6" stroke="#5b2d96" stroke-width="1.3"/>
<ellipse cx="606.4" cy="424.6" rx="1.4" ry="2.1" fill="#5a14c8"/>
<line x1="607.3" y1="418.25" x2="701.8" y2="418.25" stroke="#5b2d96" stroke-width="1.3"/>
<ellipse cx="606.4" cy="418.25" rx="1.4" ry="2.1" fill="#5a14c8"/>
<line x1="607.3" y1="411.89" x2="701.8" y2="411.89" stroke="#5b2d96" stroke-width="1.3"/>
<ellipse cx="606.4" cy="411.89" rx="1.4" ry="2.1" fill="#5a14c8"/>
<line x1="607.3" y1="405.54" x2="701.8" y2="405.54" stroke="#5b2d96" stroke-width="1.3"/>
<ellipse cx="606.4" cy="405.54" rx="1.4" ry="2.1" fill="#5a14c8"/>
<line x1="607.3" y1="399.19" x2="701.8" y2="399.19" stroke="#5b2d96" stroke-width="1.3"/>
<ellipse cx="606.4" cy="399.19" rx="1.4" ry="2.1" fill="#5a14c8"/>
<line x1="607.3" y1="392.84" x2="701.8" y2="392.84" stroke="#5b2d96" stroke-width="1.3"/>
<ellipse cx="606.4" cy="392.84" rx="1.4" ry="2.1" fill="#5a14c8"/>
<line x1="619.9" y1="386.48" x2="664.0" y2="386.48" stroke="#2b37d6" stroke-width="1.3"/>
<ellipse cx="619.0" cy="386.48" rx="1.4" ry="2.1" fill="#1a22ee"/>
<line x1="619.9" y1="380.13" x2="664.0" y2="380.13" stroke="#2b37d6" stroke-width="1.3"/>
<ellipse cx="619.0" cy="380.13" rx="1.4" ry="2.1" fill="#1a22ee"/>
<line x1="619.9" y1="373.78" x2="664.0" y2="373.78" stroke="#2b37d6" stroke-width="1.3"/>
<ellipse cx="619.0" cy="373.78" rx="1.4" ry="2.1" fill="#1a22ee"/>
<line x1="619.9" y1="367.42" x2="664.0" y2="367.42" stroke="#2b37d6" stroke-width="1.3"/>
<ellipse cx="619.0" cy="367.42" rx="1.4" ry="2.1" fill="#1a22ee"/>
<line x1="619.9" y1="361.07" x2="664.0" y2="361.07" stroke="#2b37d6" stroke-width="1.3"/>
<ellipse cx="619.0" cy="361.07" rx="1.4" ry="2.1" fill="#1a22ee"/>
<line x1="632.5" y1="354.72" x2="664.0" y2="354.72" stroke="#35b535" stroke-width="1.3"/>
<ellipse cx="631.6" cy="354.72" rx="1.4" ry="2.1" fill="#1fe63a"/>
<line x1="632.5" y1="348.36" x2="664.0" y2="348.36" stroke="#35b535" stroke-width="1.3"/>
<ellipse cx="631.6" cy="348.36" rx="1.4" ry="2.1" fill="#1fe63a"/>
<line x1="632.5" y1="342.01" x2="664.0" y2="342.01" stroke="#35b535" stroke-width="1.3"/>
<ellipse cx="631.6" cy="342.01" rx="1.4" ry="2.1" fill="#1fe63a"/>
<line x1="632.5" y1="335.66" x2="664.0" y2="335.66" stroke="#35b535" stroke-width="1.3"/>
<ellipse cx="631.6" cy="335.66" rx="1.4" ry="2.1" fill="#1fe63a"/>
<line x1="632.5" y1="329.31" x2="664.0" y2="329.31" stroke="#35b535" stroke-width="1.3"/>
<ellipse cx="631.6" cy="329.31" rx="1.4" ry="2.1" fill="#1fe63a"/>
<path d="M519.3 424.8 L580 446 L604 454.2 Q612 455 622 453.8 Q630 453 636 450.5 L662 440.5 L690 430 L702.2 425 Q745 369 784.3 314.5" fill="none" stroke="#1f8f2f" stroke-width="0.85"/>
<path d="M519.3 424.8 L542.5 104.5 L784 314.5" fill="none" stroke="#4fa64f" stroke-width="0.9"/>
<rect x="539.6" y="102.5" width="33.6" height="15.6" fill="#fff" stroke="#555" stroke-width="1"/>
<text x="556.4" y="113.8" text-anchor="middle" font-family="DejaVu Sans, sans-serif" font-weight="bold" font-size="8.7" fill="#2f9a2f">1.497</text>
<g stroke="#e8161a" stroke-width="0.9" fill="none"><path d="M689.5 313V295.5H752.3V313M720.6 295.5V313"/></g>
<path d="M687.7 310.5H691.3L689.5 314.6Z" fill="#e8161a"/>
<path d="M718.8000000000001 310.5H722.4L720.6 314.6Z" fill="#e8161a"/>
<path d="M750.5 310.5H754.0999999999999L752.3 314.6Z" fill="#e8161a"/>
<text x="720.6" y="293.3" text-anchor="middle" font-family="Liberation Sans, sans-serif" font-size="3.6" fill="#e8161a">60.00 kN/m2</text>
<path d="M481.6 416.2V422.59999999999997" stroke="#8fa6d6" stroke-width="0.8" fill="none"/><path d="M478.20000000000005 417.4L481.0 419.4L478.20000000000005 421.4Z" fill="#4468b8"/>
<path d="M636.6 321.3V327.7" stroke="#8fa6d6" stroke-width="0.8" fill="none"/><path d="M633.2 322.5L636.0 324.5L633.2 326.5Z" fill="#4468b8"/>
<path d="M809.4 306.40000000000003V312.8" stroke="#8fa6d6" stroke-width="0.8" fill="none"/><path d="M812.8 307.6L810.0 309.6L812.8 311.6Z" fill="#4468b8"/>
<path d="M589.3 340V349.6L591.4 347.8L592.8 350.8L594 350.2L592.7 347.4H596Z" fill="#fff" stroke="#bdbdbd" stroke-width="0.6"/>
</svg>
<!-- BOTTOM -->
<div class="abs" style="left:199px;top:521.2px;width:881px;height:18.6px;background:#ededed"></div>
<div class="abs" style="left:199px;top:539.8px;width:881px;height:4px;background:#f7f7f7"></div>
<div class="abs" style="left:199px;top:543.8px;width:881px;height:15.4px;background:#f1f1f1"></div>
<div class="abs" style="left:941px;top:523.2px;width:94px;height:13.4px;background:#fff;border:1.4px solid #2a2ad8"></div>
<div class="abs" style="left:199.6px;top:544px;width:180.6px;height:15px;background:#efefef"></div>
<div class="abs" style="left:380.2px;top:544px;width:179.2px;height:15px;background:#f7f7f7"></div>
<div class="abs" style="left:379.6px;top:557.8px;width:1.6px;height:1.6px;background:#777"></div><div class="abs" style="left:558.6px;top:557.8px;width:1.6px;height:1.6px;background:#777"></div>
<svg class="abs" style="left:203.2px;top:545.4px" width="11" height="11" viewBox="0 0 11 11"><path d="M5.4 0.6l4.8 4.8-4.8 4.8L0.6 5.4z" fill="#3838ec" stroke="#16167e" stroke-width="0.7"/><path d="M5.4 2l3.2 3.4H2.2z" fill="#9a9aff" opacity="0.7"/></svg>
<svg class="abs" style="left:384.2px;top:546.4px" width="11" height="11" viewBox="0 0 11 11"><path d="M5.4 0.6l4.8 4.8-4.8 4.8L0.6 5.4z" fill="#3838ec" stroke="#16167e" stroke-width="0.7"/><path d="M5.4 2l3.2 3.4H2.2z" fill="#9a9aff" opacity="0.7"/></svg>
<div class="t tr" style="left:217.4px;top:546.1px;font-size:8px;letter-spacing:-0.27px;color:#2a2a2a">Group 1 - Master Scenario - Spencer method</div>
<div class="t tr" style="left:398.4px;top:547px;font-size:8px;letter-spacing:-0.27px;color:#2a2a2a">Group 1 - Support Design - Spencer method</div>
<div class="abs" style="left:199px;top:559.4px;width:881px;height:1px;background:#d2d2d2"></div>
<div class="abs" style="left:199px;top:560.4px;width:881px;height:12.6px;background:#f3f3f3"></div>
<div class="abs" style="left:0;top:573px;width:1080px;height:35px;background:#f1f1f1"></div>
<div class="t sb" style="left:201px;letter-spacing:-0.06px">For Help, press F1</div>
<div class="t sb" style="left:778.8px;color:#111;letter-spacing:0.07px">MAX DATATIPS</div>
<div class="t sb" style="left:849px;color:#111;letter-spacing:0.05px">SNAP</div>
<div class="t sb" style="left:876.4px;color:#8e8e8e;letter-spacing:0.2px">GRID</div>
<div class="t sb" style="left:903px;color:#111;letter-spacing:0.09px">ORTHO</div>
<div class="t sb" style="left:937.8px;color:#111;letter-spacing:0.17px">OSNAP</div>
<div class="t sb" style="left:995.8px;color:#111;letter-spacing:0.42px">17.148, 23.432</div>
<div class="abs" style="left:771px;top:562px;width:0.8px;height:11px;background:#dcdcdc"></div>
<div class="abs" style="left:842.6px;top:562px;width:0.8px;height:11px;background:#dcdcdc"></div>
<div class="abs" style="left:873.4px;top:562px;width:0.8px;height:11px;background:#dcdcdc"></div>
<div class="abs" style="left:899.8px;top:562px;width:0.8px;height:11px;background:#dcdcdc"></div>
<div class="abs" style="left:934.8px;top:562px;width:0.8px;height:11px;background:#dcdcdc"></div>
<div class="abs" style="left:970px;top:562px;width:0.8px;height:11px;background:#dcdcdc"></div>
<svg class="abs" style="left:620px;top:540px" width="60" height="45" viewBox="0 0 60 45">
<g fill="#a9a9a9">
<path d="M20.6 5.8c-8.2 0-14.8 5.4-14.8 12.2 0 3.8 2.2 7.2 5.6 9.4l-1.6 4.6 5.4-2.8c1.700.5 3.500.8 5.400.8h1.200c-.4-1.200-.6-2.400-.6-3.600 0-6.400 6.200-11.600 13.800-11.600h1.000C34.600 9.600 28.200 5.800 20.600 5.800z"/>
<path d="M48 27c0-5.600-5.600-10.200-12.400-10.200S23.200 21.400 23.200 27s5.600 10.200 12.400 10.200c1.500 0 2.900-.2 4.200-.6l4.400 2.400-1.300-3.800C46 33.200 48 30.300 48 27z"/>
</g>
<g fill="#f0f0f0"><circle cx="15.600" cy="13.800" r="1.900"/><circle cx="25.400" cy="13.800" r="1.900"/><circle cx="31.400" cy="24.200" r="1.600"/><circle cx="39.800" cy="24.200" r="1.600"/></g>
</svg>
<div class="abs" style="left:677px;top:545px;height:38px;line-height:38px;font-size:29.2px;color:#a6a6a6;white-space:nowrap;font-family:'Liberation Sans','Noto Sans CJK SC',sans-serif"><span>公众号</span><span style="display:inline-block;width:37px;text-align:center">·</span><span style="font-size:33px;letter-spacing:0.5px">igeo</span><span>中仿岩土软件</span></div>
</body></html>
